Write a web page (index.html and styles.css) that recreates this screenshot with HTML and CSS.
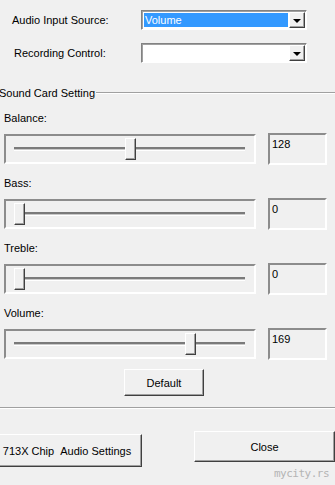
FILE: index.html
```html
<!DOCTYPE html>
<html lang="en">
<head>
    <meta charset="UTF-8">
    <meta name="viewport" content="width=device-width, initial-scale=1.0">
    <title>Sound Card Setting</title>
    <link rel="stylesheet" href="styles.css">
</head>
<body>
    <div class="dialog">
        <div class="field field-source">
            <span class="field-label">Audio Input Source:</span>
            <div class="combo">
                <span class="combo-text selected">Volume</span>
                <span class="combo-btn"><span class="arrow"></span></span>
            </div>
        </div>
        <div class="field field-record">
            <span class="field-label">Recording Control:</span>
            <div class="combo">
                <span class="combo-text"></span>
                <span class="combo-btn"><span class="arrow"></span></span>
            </div>
        </div>

        <div class="group-title"><span>Sound Card Setting</span></div>

        <div class="slider-block">
            <div class="slider-label">Balance:</div>
            <div class="slider-row">
                <div class="slider"><div class="track"></div><div class="thumb" style="left: 119px"></div></div>
                <div class="value">128</div>
            </div>
        </div>
        <div class="slider-block">
            <div class="slider-label">Bass:</div>
            <div class="slider-row">
                <div class="slider"><div class="track"></div><div class="thumb" style="left: 8px"></div></div>
                <div class="value">0</div>
            </div>
        </div>
        <div class="slider-block">
            <div class="slider-label">Treble:</div>
            <div class="slider-row">
                <div class="slider"><div class="track"></div><div class="thumb" style="left: 8px"></div></div>
                <div class="value">0</div>
            </div>
        </div>
        <div class="slider-block">
            <div class="slider-label">Volume:</div>
            <div class="slider-row">
                <div class="slider"><div class="track"></div><div class="thumb" style="left: 179px"></div></div>
                <div class="value">169</div>
            </div>
        </div>

        <button class="btn btn-default">Default</button>

        <div class="separator"></div>

        <div class="bottom-row">
            <button class="btn btn-chip">713X Chip &nbsp;Audio Settings</button>
            <button class="btn btn-close">Close</button>
        </div>

        <div class="watermark">mycity.rs</div>
    </div>
</body>
</html>
```

FILE: styles.css
```css
body {
    margin: 0;
    background-color: #f0f0f0;
    font-family: 'Liberation Sans', Arial, sans-serif;
    font-size: 11px;
    color: #000;
    overflow: hidden;
}
.dialog {
    position: relative;
    width: 335px;
    height: 485px;
}

/* combo rows */
.field {
    display: flex;
    align-items: center;
    height: 20px;
}
.field-source {
    padding-top: 10px;
}
.field-record {
    margin-top: 13px;
}
.field-label {
    box-sizing: border-box;
    width: 141px;
    padding-left: 12px;
}
.field-record .field-label {
    padding-left: 14px;
}
.combo {
    box-sizing: border-box;
    display: flex;
    width: 166px;
    height: 20px;
    padding: 1px;
    background-color: #fff;
    border: 1px solid;
    border-color: #828282 #fff #fff #828282;
    box-shadow: inset 1px 1px 0 #a0a0a0;
}
.combo-text {
    flex: 1;
    margin: 1px;
    padding-left: 1px;
    line-height: 15px;
}
.combo-text.selected {
    background-color: #3399ff;
    color: #fff;
}
.combo-btn {
    box-sizing: border-box;
    display: flex;
    align-items: center;
    justify-content: center;
    width: 16px;
    background-color: #f0f0f0;
    border: 1px solid;
    border-color: #fff #404040 #404040 #fff;
    box-shadow: inset -1px -1px 0 #a0a0a0;
}
.arrow {
    width: 0;
    height: 0;
    border-left: 4px solid transparent;
    border-right: 4px solid transparent;
    border-top: 4px solid #000;
    margin-top: 1px;
}

/* group */
.group-title {
    display: flex;
    align-items: center;
    margin: 23px 0 2px -1px;
    line-height: 14px;
}
.group-title::after {
    content: '';
    flex: 1;
    margin-left: 1px;
    border-top: 1px solid #a0a0a0;
    border-bottom: 1px solid #fff;
}

/* sliders */
.slider-block {
    margin-top: 11px;
}
.slider-label {
    padding-left: 4px;
    line-height: 14px;
    margin-bottom: 8px;
}
.slider-row {
    display: flex;
    align-items: flex-start;
}
.slider {
    position: relative;
    box-sizing: border-box;
    width: 252px;
    height: 30px;
    margin: 1px 0 0 4px;
    border: 2px solid;
    border-color: #8c8c8c #fff #fff #8c8c8c;
}
.track {
    width: 231px;
    height: 1px;
    margin: 11px 0 0 8px;
    border-top: 2px solid #7a7a7a;
    border-bottom: 1px solid #fff;
    background-color: #c8c8c8;
}
.thumb {
    position: absolute;
    top: 2px;
    box-sizing: border-box;
    width: 11px;
    height: 22px;
    background-color: #f0f0f0;
    border: 1px solid;
    border-color: #fff #404040 #404040 #fff;
    box-shadow: inset -1px -1px 0 #a0a0a0;
}
.value {
    box-sizing: border-box;
    width: 59px;
    height: 32px;
    margin-left: 12px;
    padding: 2px 0 0 2px;
    line-height: 14px;
    border: 2px solid;
    border-color: #8c8c8c #fff #fff #8c8c8c;
}

/* buttons */
.btn {
    box-sizing: border-box;
    font-family: inherit;
    font-size: 11px;
    color: #000;
    background-color: #f0f0f0;
    border: 1px solid;
    border-color: #fff #404040 #404040 #fff;
    box-shadow: inset -1px -1px 0 #a0a0a0;
    padding: 0;
}
.btn-default {
    display: block;
    width: 80px;
    height: 27px;
    margin: 9px 0 0 124px;
}
.separator {
    margin-top: 11px;
    border-top: 1px solid #a0a0a0;
    border-bottom: 1px solid #fff;
}
.bottom-row {
    display: flex;
    align-items: flex-start;
    margin-top: 22px;
}
.btn-chip {
    width: 145px;
    height: 33px;
    margin: 3px 0 0 -2px;
    padding-right: 6px;
}
.btn-close {
    width: 142px;
    height: 31px;
    margin-left: 52px;
}
.watermark {
    position: absolute;
    left: 274px;
    top: 467px;
    font-family: 'DejaVu Sans Mono', monospace;
    font-size: 11px;
    color: #b4b4b4;
    letter-spacing: -0.5px;
}
```
